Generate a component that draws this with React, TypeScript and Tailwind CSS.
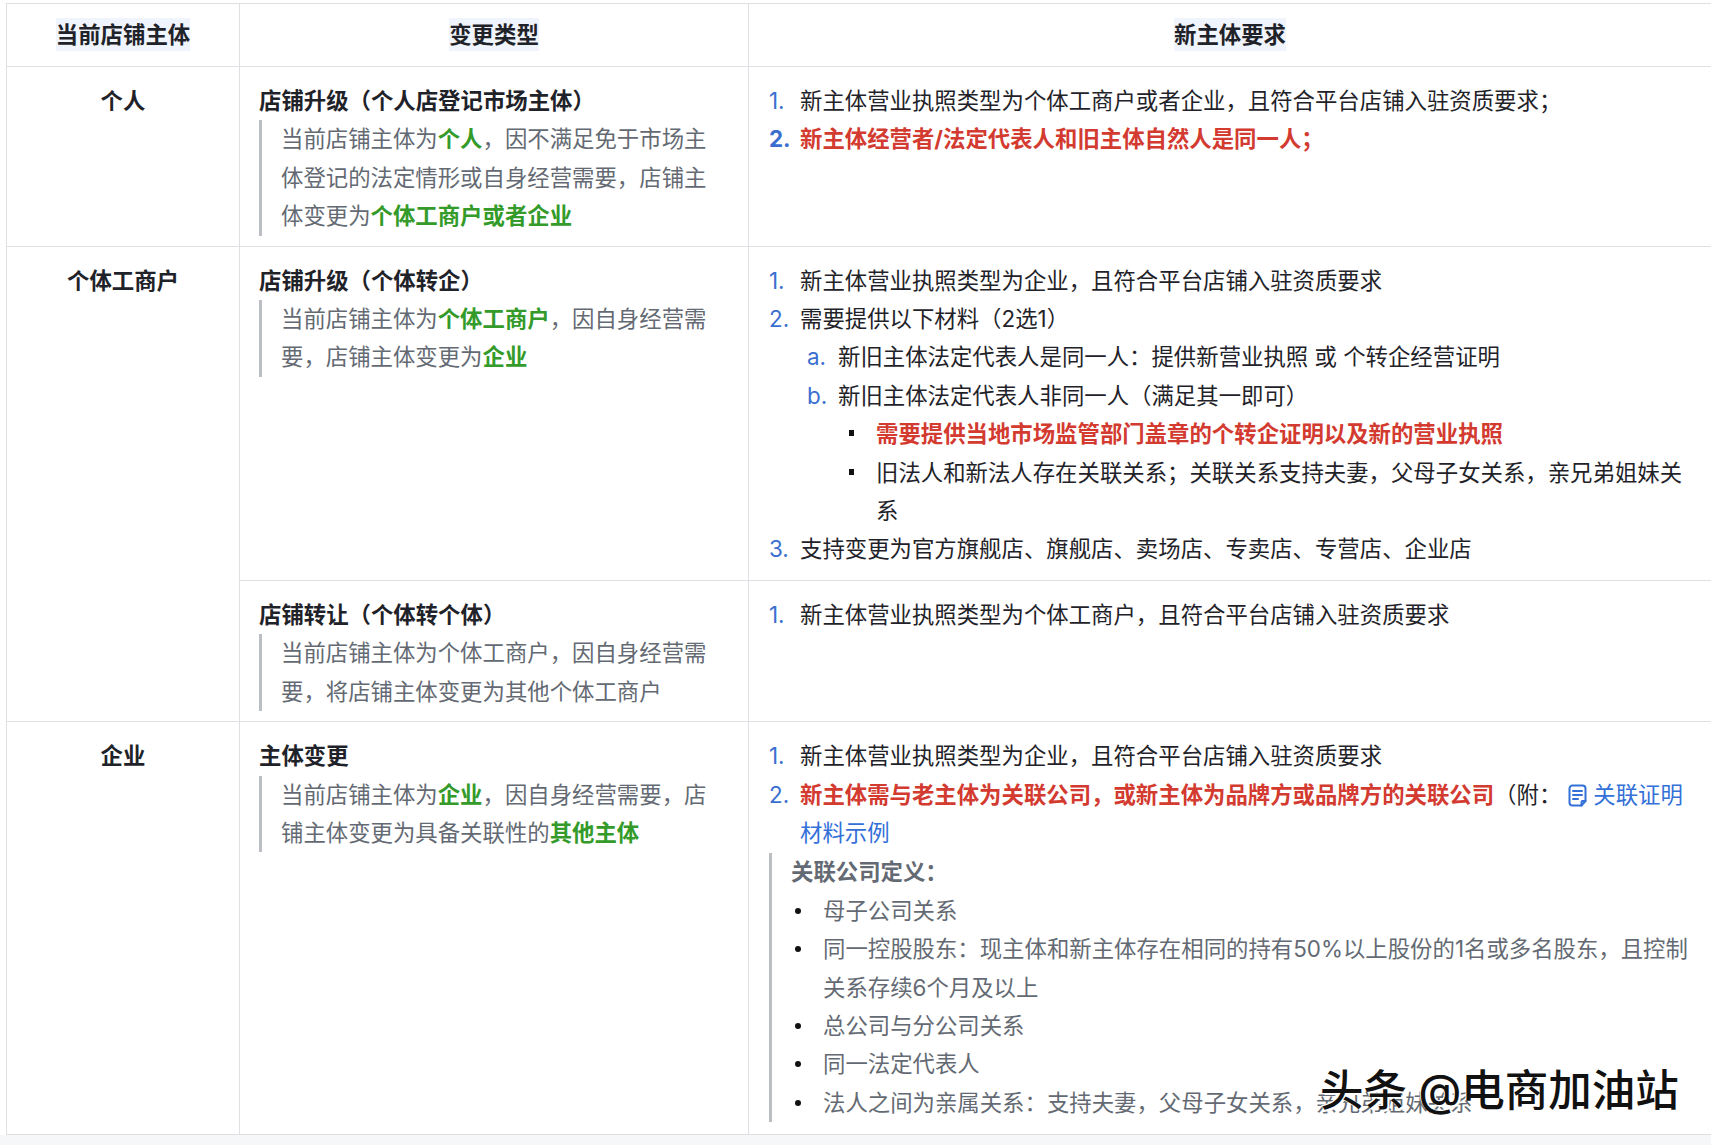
import React from "react";

const G = ({ children }: { children: React.ReactNode }) => (
  <b className="font-bold text-[#349b2b]">{children}</b>
);
const R = ({ children }: { children: React.ReactNode }) => (
  <b className="font-bold text-[#d33a30]">{children}</b>
);

const Li = ({
  mark,
  markClass = "text-[#3a6fd0]",
  gap = "w-[31px]",
  children,
}: {
  mark: React.ReactNode;
  markClass?: string;
  gap?: string;
  children: React.ReactNode;
}) => (
  <div className="flex">
    <span className={`shrink-0 ${gap} ${markClass}`}>{mark}</span>
    <div className="min-w-0 flex-1">{children}</div>
  </div>
);

const Sub = ({ mark, children }: { mark: string; children: React.ReactNode }) => (
  <div className="pl-[38px]">
    <Li mark={mark} gap="w-[31px]">{children}</Li>
  </div>
);

const Square = ({ children }: { children: React.ReactNode }) => (
  <div className="pl-[80px]">
    <Li mark={<span className="mt-[15px] block h-[6px] w-[5px] bg-[#111]" />} gap="w-[27px]">
      {children}
    </Li>
  </div>
);

const Dot = ({ children }: { children: React.ReactNode }) => (
  <Li mark={<span className="ml-[4px] mt-[16px] block h-[6px] w-[6px] rounded-full bg-[#111]" />} gap="w-[32px]">
    {children}
  </Li>
);

const Quote = ({ children, className = "" }: { children: React.ReactNode; className?: string }) => (
  <div className={`border-l-[3px] border-[#bbbfc4] pl-[19px] text-[#646a73] ${className}`}>{children}</div>
);

const Title = ({ children }: { children: React.ReactNode }) => (
  <div className="font-bold text-[#1f2329]">{children}</div>
);

const Head = ({ children }: { children: React.ReactNode }) => (
  <th className="h-[63px] border-[1.5px] border-[#dee0e3] p-0 text-center align-middle font-bold">
    <span className="bg-[#f0f4fc] py-[3px]">{children}</span>
  </th>
);

const typeCell = "border-[1.5px] border-[#dee0e3] pl-[19px] pr-[22px] pt-[15px] pb-[10px] align-top";
const tallTypeCell = "border-[1.5px] border-[#dee0e3] pl-[19px] pr-[22px] pt-[15px] pb-[11px] align-top";
const needCell = "border-[1.5px] border-[#dee0e3] pl-[20px] pr-[18px] pt-[15px] pb-[10px] align-top";
const tallNeedCell = "border-[1.5px] border-[#dee0e3] pl-[20px] pr-[18px] pt-[15px] pb-[11px] align-top";
const owner = "border-[1.5px] border-[#dee0e3] px-[19px] pt-[15px] pb-[10px] align-top text-center font-bold";

export default function App() {
  return (
    <div className="relative h-[1145px] w-[1711px] overflow-hidden bg-[#f6f7f8] font-['Inter','Noto_Sans_CJK_SC',sans-serif] text-[22.4px] leading-[38.4px] text-[#1f2329]">
      <div className="h-[3px] bg-white" />
      <div className="bg-white pl-[6px]">
        <table className="w-[1706px] table-fixed border-collapse border-0 bg-white">
          <colgroup>
            <col className="w-[233px]" />
            <col className="w-[509px]" />
            <col />
          </colgroup>
          <thead>
            <tr>
              <Head>当前店铺主体</Head>
              <Head>变更类型</Head>
              <Head>新主体要求</Head>
            </tr>
          </thead>
          <tbody>
            <tr>
              <td className={owner}>个人</td>
              <td className={typeCell}>
                <Title>店铺升级（个人店登记市场主体）</Title>
                <Quote>
                  当前店铺主体为<G>个人</G>，因不满足免于市场主体登记的法定情形或自身经营需要，店铺主体变更为
                  <G>个体工商户或者企业</G>
                </Quote>
              </td>
              <td className={needCell}>
                <Li mark="1.">新主体营业执照类型为个体工商户或者企业，且符合平台店铺入驻资质要求；</Li>
                <Li mark="2." markClass="font-bold text-[#3a6fd0]">
                  <R>新主体经营者/法定代表人和旧主体自然人是同一人；</R>
                </Li>
              </td>
            </tr>
            <tr>
              <td className={owner} rowSpan={2}>个体工商户</td>
              <td className={tallTypeCell}>
                <Title>店铺升级（个体转企）</Title>
                <Quote>
                  当前店铺主体为<G>个体工商户</G>，因自身经营需要，店铺主体变更为<G>企业</G>
                </Quote>
              </td>
              <td className={tallNeedCell}>
                <Li mark="1.">新主体营业执照类型为企业，且符合平台店铺入驻资质要求</Li>
                <Li mark="2.">需要提供以下材料（2选1）</Li>
                <Sub mark="a.">新旧主体法定代表人是同一人：提供新营业执照 或 个转企经营证明</Sub>
                <Sub mark="b.">新旧主体法定代表人非同一人（满足其一即可）</Sub>
                <Square>
                  <R>需要提供当地市场监管部门盖章的个转企证明以及新的营业执照</R>
                </Square>
                <Square>旧法人和新法人存在关联关系；关联关系支持夫妻，父母子女关系，亲兄弟姐妹关系</Square>
                <Li mark="3.">支持变更为官方旗舰店、旗舰店、卖场店、专卖店、专营店、企业店</Li>
              </td>
            </tr>
            <tr>
              <td className={typeCell}>
                <Title>店铺转让（个体转个体）</Title>
                <Quote>当前店铺主体为个体工商户，因自身经营需要，将店铺主体变更为其他个体工商户</Quote>
              </td>
              <td className={needCell}>
                <Li mark="1.">新主体营业执照类型为个体工商户，且符合平台店铺入驻资质要求</Li>
              </td>
            </tr>
            <tr>
              <td className={owner}>企业</td>
              <td className={typeCell}>
                <Title>主体变更</Title>
                <Quote>
                  当前店铺主体为<G>企业</G>，因自身经营需要，店铺主体变更为具备关联性的<G>其他主体</G>
                </Quote>
              </td>
              <td className="border-[1.5px] border-[#dee0e3] pl-[20px] pr-[18px] pt-[15px] pb-[12px] align-top">
                <Li mark="1.">新主体营业执照类型为企业，且符合平台店铺入驻资质要求</Li>
                <Li mark="2.">
                  <R>新主体需与老主体为关联公司，或新主体为品牌方或品牌方的关联公司</R>（附：
                  <span className="text-[#3370d8]">
                    <svg
                      viewBox="0 0 19 23"
                      className="ml-[7px] mr-[6px] inline-block h-[23px] w-[19px] align-[-4px]"
                      fill="none"
                      stroke="#3370d8"
                      strokeWidth="2"
                      strokeLinejoin="round"
                      strokeLinecap="round"
                    >
                      <path d="M13.500 21.500H4.500a3 3 0 0 1-3-3V4.500a3 3 0 0 1 3-3h10a3 3 0 0 1 3 3V17z" />
                      <path d="M5 7h9M5 11h9M5 15h5" />
                      <path d="M13.500 21.500V18a1 1 0 0 1 1-1h3" />
                    </svg>
                    关联证明材料示例
                  </span>
                </Li>
                <Quote className="mt-[1px]">
                  <div className="font-bold">关联公司定义：</div>
                  <Dot>母子公司关系</Dot>
                  <Dot>同一控股股东：现主体和新主体存在相同的持有50%以上股份的1名或多名股东，且控制关系存续6个月及以上</Dot>
                  <Dot>总公司与分公司关系</Dot>
                  <Dot>同一法定代表人</Dot>
                  <Dot>法人之间为亲属关系：支持夫妻，父母子女关系，亲兄弟姐妹关系</Dot>
                </Quote>
              </td>
            </tr>
          </tbody>
        </table>
      </div>
      {/* watermark over the last rows */}
      <div className="absolute left-[1320px] top-[1060px] whitespace-nowrap text-[43.5px] font-medium leading-[60px] text-[#111] [text-shadow:2px_2px_0_#fff,-1px_-1px_0_#fff]">
        头条 @电商加油站
      </div>
    </div>
  );
}
